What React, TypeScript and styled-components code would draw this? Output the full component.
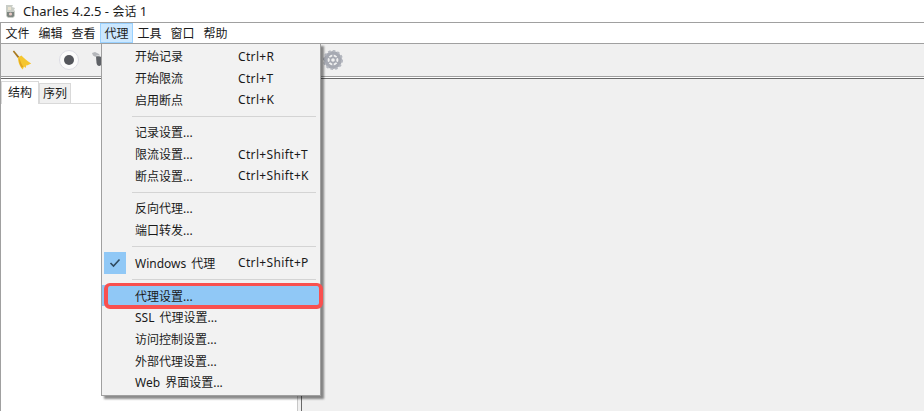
import React from 'react';
import styled, {createGlobalStyle} from 'styled-components';

const GlobalStyle = createGlobalStyle`
  html, body {
    margin: 0;
    padding: 0;
    background: #fff;
  }
  * {
    box-sizing: border-box;
  }
`;

const Window = styled.div`
  width: 924px;
  height: 411px;
  overflow: hidden;
  position: relative;
  display: flex;
  flex-direction: column;
  font-family: "Noto Sans", "Noto Sans CJK SC", sans-serif;
  font-size: 12px;
  color: #1a1a1a;
  background: #fff;
`;

const TitleBar = styled.div`
  height: 22px;
  flex: none;
  display: flex;
  align-items: center;
  gap: 7px;
  padding-left: 5px;
  font-size: 13px;
`;

const TitleCjk = styled.span`
  font-size: 12px;
`;

const Frame = styled.div`
  flex: 1;
  min-height: 0;
  display: flex;
  flex-direction: column;
  border-left: 1px solid #a0a0a0;
`;

const MenuBar = styled.div`
  height: 22px;
  flex: none;
  display: flex;
  align-items: stretch;
  border-top: 1px solid #a0a0a0;
  border-bottom: 1px solid #a0a0a0;
`;

const MenuLabel = styled.div<{$open?: boolean}>`
  width: 33px;
  display: flex;
  align-items: center;
  justify-content: center;
  background: ${p => (p.$open ? '#cce8ff' : 'transparent')};
  box-shadow: ${p => (p.$open ? 'inset 0 0 0 1px #99d1ff' : 'none')};
`;

const Toolbar = styled.div`
  height: 33px;
  flex: none;
  margin-bottom: 1px;
  display: flex;
  align-items: center;
  padding-bottom: 1px;
  background: #f0f0f0;
  border-bottom: 1px solid #a0a0a0;
`;

const ToolIcon = styled.svg<{$left: number}>`
  flex: none;
  margin-left: ${p => p.$left}px;
`;

const Body = styled.div`
  flex: 1;
  display: flex;
  min-height: 0;
  border-top: 1px solid #696969;
`;

const LeftPane = styled.div`
  width: 297px;
  flex: none;
  background: #fff;
  display: flex;
  flex-direction: column;
  border-right: 1px solid #c8c8c8;
`;

const Sash = styled.div`
  width: 4px;
  flex: none;
  background: #f0f0f0;
  border-right: 1px solid #696969;
`;

const Tabs = styled.div`
  display: flex;
  align-items: flex-end;
  height: 24px;
  flex: none;
`;

const Tab = styled.div<{$active?: boolean}>`
  display: flex;
  align-items: center;
  justify-content: center;
  padding-bottom: 2px;
  width: ${p => (p.$active ? 38 : 32)}px;
  height: ${p => (p.$active ? 23 : 20)}px;
  background: ${p => (p.$active ? '#fff' : '#f0f0f0')};
  border: 1px solid #d9d9d9;
  border-bottom: none;
  margin-bottom: ${p => (p.$active ? -1 : 0)}px;
  position: relative;
`;

const TabContent = styled.div`
  flex: 1;
  border-top: 1px solid #d9d9d9;
`;

const RightPane = styled.div`
  flex: 1;
  background: #f0f0f0;
`;

const Menu = styled.div`
  position: absolute;
  left: 101px;
  top: 43px;
  width: 220px;
  height: 353px;
  padding-top: 1.5px;
  background: #f2f2f2;
  border: 1px solid #a0a0a0;
  box-shadow: 3px 3px 2px rgba(0, 0, 0, 0.45);
`;

const Item = styled.div<{$selected?: boolean}>`
  height: 21.7px;
  display: flex;
  align-items: center;
  padding-left: 33px;
  position: relative;
  background: ${p => (p.$selected ? '#90c8f6' : 'transparent')};
`;

const ItemLabel = styled.span`
  width: 103px;
  flex: none;
  white-space: nowrap;
  word-spacing: 2px;
`;

const Shortcut = styled.span`
  white-space: nowrap;
  letter-spacing: 0.35px;
`;

const Separator = styled.div`
  height: 11px;
  display: flex;
  align-items: center;
  padding: 0 4px 0 30px;

  &::after {
    content: '';
    flex: 1;
    height: 1px;
    background: #d4d4d4;
  }
`;

const CheckBox = styled.div`
  position: absolute;
  left: 2px;
  top: 0;
  width: 22px;
  height: 22px;
  background: #90c8f6;
  display: flex;
  align-items: center;
  justify-content: center;
`;

const Highlight = styled.div`
  position: absolute;
  left: 104px;
  top: 283px;
  width: 219px;
  height: 26px;
  border-style: solid;
  border-color: #f9504f;
  border-width: 3px 4px 4px 4px;
  border-radius: 6px;
`;

const menuLabels = ['文件', '编辑', '查看', '代理', '工具', '窗口', '帮助'];

const AppIcon = () => (
    <svg width="11" height="15" viewBox="0 0 11 15">
        <path d="M1 1h7l-1 2 3 1-1 2 1 1v5l-2 2H3l-2-2V6z" fill="#c9cdc6"/>
        <path d="M3 3h3v3H3z" fill="#e9e2cf"/>
        <path d="M2 8h7v4l-1 1H3l-1-1z" fill="#7d8580"/>
        <circle cx="5.5" cy="10" r="1.6" fill="#e6c9c4"/>
    </svg>
);

const Broom = () => (
    <ToolIcon $left={11} width="20" height="20" viewBox="0 0 20 20">
        <path d="M0.8 1.5 L2 0.6 L7.5 7 L6 8.2z" fill="#a8791f"/>
        <path d="M6 7.6 L9.4 5.6 C12 8 15 11 19.2 13.4 L15 15.6 L14.6 14.8 L13.6 18 L12 16.6 L10.8 19.6 C8 17 5.8 12 6 7.6z" fill="#f5c62f"/>
        <path d="M7.4 8 C8.4 12 10 15 11.4 17 L9.6 17.6 C7.8 15 6.6 11 7.4 8z" fill="#e2a41d"/>
    </ToolIcon>
);

const RecordButton = () => (
    <ToolIcon $left={27} width="20" height="20" viewBox="0 0 20 20">
        <circle cx="10" cy="10" r="9.5" fill="#fbfbfb" stroke="#dcdce4"/>
        <circle cx="10" cy="10" r="5" fill="#54565c"/>
    </ToolIcon>
);

const Turtle = () => (
    <ToolIcon $left={13} width="9" height="15" viewBox="0 0 9 15">
        <path d="M0 1 L3 0 L7 2 L8 3.5 L4.5 3.5 L3.5 5 L1 3.5z" fill="#b4b6ba"/>
        <path d="M4 4.5 C6 4 9 4.5 9 5 V13 C7.5 15 5 14 4.5 11z" fill="#5e6166"/>
    </ToolIcon>
);

const Gear = () => (
    <ToolIcon $left={222} width="20" height="20" viewBox="0 0 20 20">
        <circle cx="10" cy="10" r="7.2" fill="none" stroke="#a6a9b2" strokeWidth="3.6"/>
        <circle cx="10" cy="10" r="9" fill="none" stroke="#b4b7bf" strokeWidth="2" strokeDasharray="2.6 2.05"/>
        <circle cx="10" cy="10" r="2.6" fill="none" stroke="#a6a9b2" strokeWidth="1.6"/>
        <path d="M10 4v3M10 13v3M4.8 7l2.6 1.5M12.6 11.5l2.6 1.5M4.8 13l2.6-1.5M12.6 8.5L15.2 7" stroke="#a6a9b2" strokeWidth="1.4"/>
    </ToolIcon>
);

const App: React.FC = () => {
    return (
        <Window>
            <GlobalStyle/>
            <TitleBar>
                <AppIcon/>
                <span>Charles 4.2.5 - <TitleCjk>会话</TitleCjk> 1</span>
            </TitleBar>
            <Frame>
                <MenuBar>
                    {menuLabels.map(label => (
                        <MenuLabel key={label} $open={label === '代理'}>{label}</MenuLabel>
                    ))}
                </MenuBar>
                <Toolbar>
                    <Broom/>
                    <RecordButton/>
                    <Turtle/>
                    <Gear/>
                </Toolbar>
                <Body>
                    <LeftPane>
                        <Tabs>
                            <Tab $active>结构</Tab>
                            <Tab>序列</Tab>
                        </Tabs>
                        <TabContent/>
                    </LeftPane>
                    <Sash/>
                    <RightPane/>
                </Body>
            </Frame>
            <Menu>
                <Item><ItemLabel>开始记录</ItemLabel><Shortcut>Ctrl+R</Shortcut></Item>
                <Item><ItemLabel>开始限流</ItemLabel><Shortcut>Ctrl+T</Shortcut></Item>
                <Item><ItemLabel>启用断点</ItemLabel><Shortcut>Ctrl+K</Shortcut></Item>
                <Separator/>
                <Item><ItemLabel>记录设置...</ItemLabel></Item>
                <Item><ItemLabel>限流设置...</ItemLabel><Shortcut>Ctrl+Shift+T</Shortcut></Item>
                <Item><ItemLabel>断点设置...</ItemLabel><Shortcut>Ctrl+Shift+K</Shortcut></Item>
                <Separator/>
                <Item><ItemLabel>反向代理...</ItemLabel></Item>
                <Item><ItemLabel>端口转发...</ItemLabel></Item>
                <Separator/>
                <Item>
                    <CheckBox>
                        <svg width="12" height="10" viewBox="0 0 12 10">
                            <path d="M1.5 5 L4.5 8 L10.5 1.5" fill="none" stroke="#2f4a60" strokeWidth="1.6"/>
                        </svg>
                    </CheckBox>
                    <ItemLabel>Windows 代理</ItemLabel>
                    <Shortcut>Ctrl+Shift+P</Shortcut>
                </Item>
                <Separator/>
                <Item $selected><ItemLabel>代理设置...</ItemLabel></Item>
                <Item><ItemLabel>SSL 代理设置...</ItemLabel></Item>
                <Item><ItemLabel>访问控制设置...</ItemLabel></Item>
                <Item><ItemLabel>外部代理设置...</ItemLabel></Item>
                <Item><ItemLabel>Web 界面设置...</ItemLabel></Item>
            </Menu>
            <Highlight/>
        </Window>
    );
};

export default App;
